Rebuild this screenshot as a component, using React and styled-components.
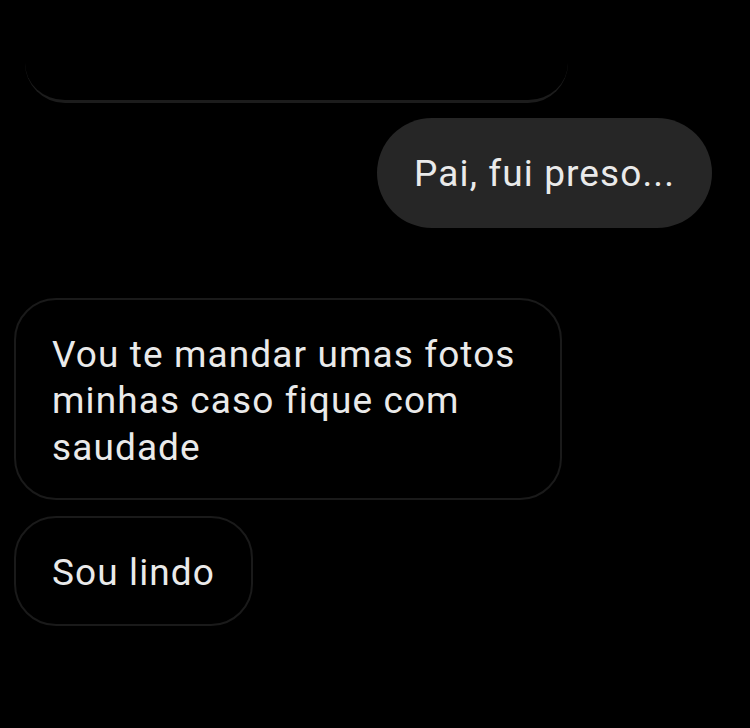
import React from "react";
import styled, { createGlobalStyle } from "styled-components";

const Global = createGlobalStyle`
  html, body { margin: 0; padding: 0; background: #000; }
  body { font-family: Roboto, "Noto Sans", "Liberation Sans", sans-serif; }
`;

const Screen = styled.div`
  width: 750px;
  height: 728px;
  overflow: hidden;
  background: #000;
  display: flex;
  flex-direction: column;
  padding: 0 38px 0 14px;
  box-sizing: border-box;
`;

const Row = styled.div`
  display: flex;
  justify-content: ${(p) => (p.$mine ? "flex-end" : "flex-start")};
  margin-top: ${(p) => p.$gap || 0}px;
`;

const Bubble = styled.div`
  box-sizing: border-box;
  max-width: 548px;
  padding: ${(p) => (p.$mine ? "33px 37px 30px" : "32px 36px 27px")};
  border-radius: ${(p) => (p.$mine ? 55 : 42)}px;
  background: ${(p) => (p.$mine ? "#262626" : "#000")};
  border: ${(p) => (p.$mine ? "none" : "2px solid #1a1a1a")};
  color: #eaeaea;
  font-size: 37px;
  line-height: 46.5px;
  letter-spacing: 1.1px;
`;

const Cutoff = styled.div`
  box-sizing: border-box;
  width: 543px;
  height: 180px;
  margin-top: -77px;
  margin-left: 11px;
  border-bottom: 3px solid #1c1c1c;
  border-radius: 40px;
`;

export default function App() {
  return (
    <>
      <Global />
      <Screen>
        <Row>
          <Cutoff />
        </Row>
        <Row $mine $gap={15}>
          <Bubble $mine>Pai, fui preso...</Bubble>
        </Row>
        <Row $gap={70}>
          <Bubble>Vou te mandar umas fotos minhas caso fique com saudade</Bubble>
        </Row>
        <Row $gap={16}>
          <Bubble>Sou lindo</Bubble>
        </Row>
      </Screen>
    </>
  );
}
